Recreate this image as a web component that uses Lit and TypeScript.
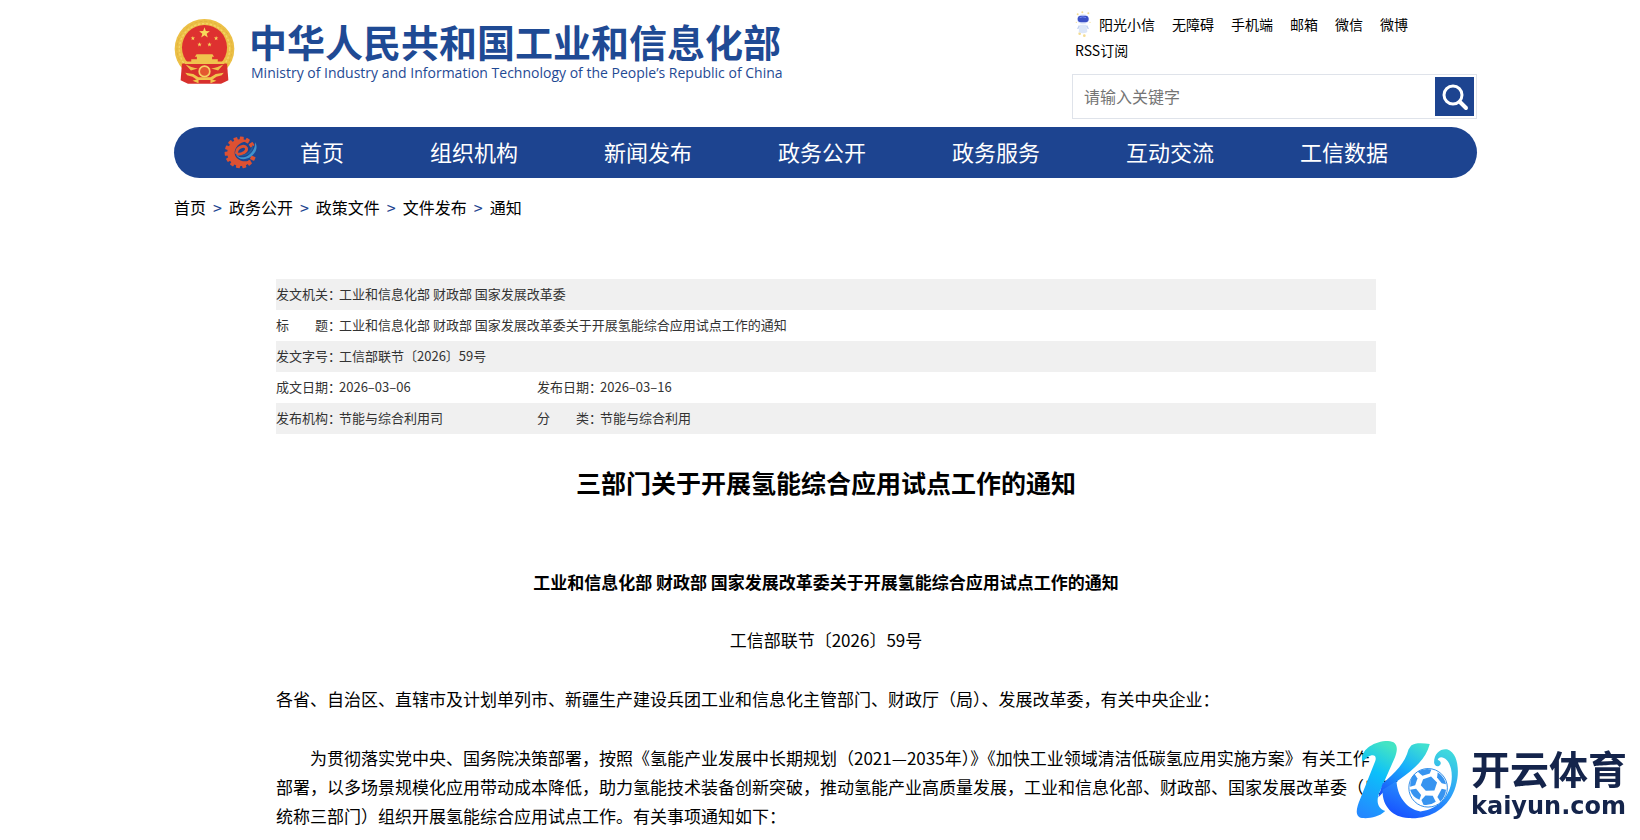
import { LitElement, html, css, svg } from "lit";
import { customElement } from "lit/decorators.js";

const EXTRA_LINKS = ["无障碍", "手机端", "邮箱", "微信", "微博"];
const NAV = ["首页", "组织机构", "新闻发布", "政务公开", "政务服务", "互动交流", "工信数据"];
const CRUMBS = ["首页", "政务公开", "政策文件", "文件发布", "通知"];

const starPath = (cx: number, cy: number, r: number) => {
  const pts: string[] = [];
  for (let i = 0; i < 10; i++) {
    const a = -Math.PI / 2 + (i * Math.PI) / 5;
    const k = i % 2 ? r * 0.4 : r;
    pts.push(`${(cx + k * Math.cos(a)).toFixed(1)},${(cy + k * Math.sin(a)).toFixed(1)}`);
  }
  return pts.join(" ");
};

const emblem = html`
  <svg class="emblem" viewBox="0 0 184 200" aria-hidden="true">
    <circle cx="92" cy="92" r="90" fill="#ecc046" />
    <circle cx="92" cy="92" r="83" fill="none" stroke="#dcab3a" stroke-width="2" stroke-dasharray="9 6" />
    <circle cx="92" cy="92" r="76" fill="none" stroke="#f5d568" stroke-width="4" stroke-dasharray="7 5" />
    <circle cx="92" cy="88" r="68" fill="#de3130" />
    <polygon points=${starPath(92, 44, 17)} fill="#f7d95b" />
    <polygon points=${starPath(57, 60, 7)} fill="#f7d95b" />
    <polygon points=${starPath(77, 79, 7)} fill="#f7d95b" />
    <polygon points=${starPath(107, 79, 7)} fill="#f7d95b" />
    <polygon points=${starPath(127, 60, 7)} fill="#f7d95b" />
    <path d="M68 108h48l5 8h-6v7h17v10H52v-10h17v-7h-6z" fill="#f0c44d" />
    <path d="M24 137l30-5h76l30 5 4 50-22 10H42l-22-10z" fill="#d8302d" />
    <path d="M32 130h120v8H32z" fill="#f0c44d" />
    <path d="M35 139q57 28 114 0l-16 18q-41-14-82 0z" fill="#efc24a" />
    <circle cx="92" cy="160" r="16" fill="#e4582f" stroke="#f6d364" stroke-width="5" />
    <path d="M34 164l24 4 16 10h36l16-10 24-4-6 8-16 4-14 10H70l-14-10-16-4z" fill="#f0c44d" />
    <path d="M56 188l18-6v14zM128 188l-18-6v14z" fill="#f0c44d" />
  </svg>
`;

const mascot = html`
  <svg class="mascot" viewBox="0 0 48 78" aria-hidden="true">
    <g fill="#f3dc93">
      <circle cx="8" cy="10" r="3" /><circle cx="22" cy="4" r="3" /><circle cx="40" cy="7" r="3" />
      <circle cx="4" cy="34" r="2" /><circle cx="45" cy="34" r="2" />
      <circle cx="14" cy="68" r="4" /><circle cx="28" cy="74" r="4" />
    </g>
    <ellipse cx="24" cy="25" rx="18" ry="15" fill="#dfe6fa" />
    <rect x="8" y="14" width="33" height="20" rx="10" fill="#3c51c6" />
    <path d="M14 20q9-5 19 0" stroke="#7388ea" stroke-width="3" fill="none" />
    <path d="M14 41h20l3 22q-13 8-26 0z" fill="#dce6f8" />
    <path d="M13 44l-5 10M35 44l5 10" stroke="#c3d2f1" stroke-width="4" />
  </svg>
`;

const gearTeeth = Array.from({ length: 13 }, (_, i) => 25 + i * 25);
const gear = html`
  <svg class="gear" viewBox="0 0 100 100" aria-hidden="true">
    <g fill="#dd5132">
      ${gearTeeth.map((a) => svg`<rect x="84" y="44" width="14" height="12" rx="2" transform="rotate(${a} 50 50)" />`)}
    </g>
    <path d="M80 79A41 41 0 1 1 76 18C61 15 50 20 42 28C26 46 30 66 50 74C60 78 72 78 80 73z" fill="#dd5132" />
    <path d="M38 51C39 33 63 26 68 37C71 47 55 55 43 55" fill="none" stroke="#dd5132" stroke-width="9" stroke-linecap="round" />
    <path d="M36 47C36 66 60 71 78 55C89 45 96 31 94 19C104 32 97 53 80 64C58 77 34 69 36 47z" fill="#3f93cd" />
    <path d="M45 57C62 61 82 49 87 26C93 47 69 68 45 57z" fill="#225f9f" />
  </svg>
`;

const ballMark = html`
  <svg class="mark" viewBox="0 0 310 236" aria-hidden="true">
    <defs>
      <linearGradient id="stem" x1="0.6" y1="0" x2="0.3" y2="1">
        <stop offset="0" stop-color="#43e4c4" />
        <stop offset="0.4" stop-color="#0cc0fa" />
        <stop offset="1" stop-color="#2489ff" />
      </linearGradient>
      <linearGradient id="arm" x1="0.8" y1="0" x2="0.2" y2="1">
        <stop offset="0" stop-color="#40e0d0" />
        <stop offset="0.45" stop-color="#16b0fb" />
        <stop offset="1" stop-color="#1c55fa" />
      </linearGradient>
      <linearGradient id="swoosh" x1="0.8" y1="0" x2="0.3" y2="1">
        <stop offset="0" stop-color="#3ed9dd" />
        <stop offset="0.5" stop-color="#2b9dfb" />
        <stop offset="1" stop-color="#1855ff" />
      </linearGradient>
    </defs>
    <path d="M20 66C8 34 50 2 96 2C126 3 128 25 116 54L70 158C62 180 61 202 88 213C68 232 40 236 18 234C-6 230 2 202 12 178L58 62C66 38 38 40 20 66z" fill="url(#stem)" />
    <path d="M166 16C178 6 202 8 222 11C210 58 176 84 134 116C106 136 84 154 67 172L80 130C118 98 148 68 158 28z" fill="url(#arm)" />
    <path d="M80 149L122 123C124 164 148 205 194 214C264 206 298 144 286 86C278 50 250 44 246 59C251 60 258 65 254 73C249 82 236 79 235 67C235 38 256 24 276 28C306 38 314 92 300 138C280 206 220 238 158 234C108 232 78 196 80 149z" fill="url(#swoosh)" />
    <circle cx="217" cy="143" r="58" fill="#fff" stroke="#338fe8" stroke-width="3" />
    <g fill="#3794f0">
      <path d="M202 117l24-8 18 18-8 24-26 1-15-17z" />
      <path d="M185 94q20-11 42-6l-5 12-22 7z" />
      <path d="M246 96q20 14 25 36l-13-3-14-17z" />
      <path d="M258 146l13 3q-2 22-17 36l-9-14z" />
      <path d="M209 166l22 1 9 18q-16 12-37 9l-6-14z" />
      <path d="M163 149l18-3 15 19-5 14q-22-8-28-30z" />
      <path d="M176 101l9 14-7 20-15 5q-1-23 13-39z" />
    </g>
  </svg>
`;

@customElement("app-root")
export class AppRoot extends LitElement {
  static styles = css`
    :host {
      display: block;
      min-height: 100vh;
      background: #fff;
      color: #000;
      font-family: "Noto Sans CJK SC", "Noto Sans", sans-serif;
      font-size: 16px;
    }
    * { box-sizing: border-box; }
    a { color: inherit; text-decoration: none; }
    .page { padding: 0 163px 0 174px; }
    .header { display: flex; justify-content: space-between; height: 127px; }
    .brand { display: flex; gap: 14px; padding-top: 18px; color: #1f4a94; }
    .emblem { width: 61px; height: 67px; }
    .cn { display: block; font-size: 38px; line-height: 46px; font-weight: 700; }
    .en { display: block; font-family: "Open Sans", "Noto Sans", sans-serif; font-size: 14px; line-height: 18px; padding-left: 2px; }
    .tools { width: 405px; padding-top: 11px; }
    .links { display: flex; flex-wrap: wrap; column-gap: 17px; margin: 0; padding: 0 56px 0 3px; list-style: none; font-size: 14px; line-height: 26px; }
    .links a { display: flex; align-items: center; gap: 8px; }
    .mascot { width: 16px; height: 26px; }
    .search { display: flex; align-items: center; margin-top: 11px; height: 45px; padding: 2px; border: 1px solid #dfe3ea; }
    .search input { flex: 1; min-width: 0; height: 36px; border: 0; outline: 0; padding: 0 9px 2px; font: inherit; color: #333; background: none; }
    .search input::placeholder { color: #757575; }
    .search button { display: grid; place-items: center; width: 39px; height: 39px; border: 0; padding: 0; background: #1d4490; }
    .search svg { width: 28px; height: 28px; }
    .nav { display: flex; align-items: center; height: 51px; padding: 0 50px; border-radius: 26px; background: #1d4490; color: #fff; }
    .gear { width: 33px; height: 33px; margin-right: 43px; }
    .nav ul { display: flex; gap: 86px; margin: 0; padding: 0 0 4px; list-style: none; font-size: 22px; line-height: 32px; white-space: nowrap; }
    .crumbs { display: flex; gap: 7px; padding-top: 17px; line-height: 24px; }
    .crumbs span { color: #1d4490; }
    .content { padding: 60px 101px 0 102px; }
    table { width: 100%; border-collapse: collapse; table-layout: fixed; font-size: 13px; line-height: 18px; color: #333; }
    tr:nth-child(odd) { background: #f0f0f0; }
    th, td { height: 31px; padding: 0 0 2px; text-align: left; font-weight: 400; white-space: nowrap; }
    .c-label { width: 63px; }
    .c-value { width: 198px; }
    .spread { display: flex; width: 65px; }
    .spread b { font-weight: 400; flex: 1; }
    h1 { margin: 29px 0 0; font-size: 25px; line-height: 38px; font-weight: 700; text-align: center; }
    .article { font-size: 17px; line-height: 29px; }
    .article p { margin: 0 0 30px; }
    h2 { margin: 66px 0 29px; font-size: 17px; line-height: 29px; font-weight: 700; text-align: center; }
    .article .docno { text-align: center; }
    .article .body { text-indent: 2em; white-space: nowrap; }
    .watermark { position: fixed; right: 13px; bottom: 20px; display: flex; gap: 12px; color: #14244b; }
    .mark { width: 103px; height: 79px; }
    .wm-text { padding-top: 2px; }
    .wm-cn { display: block; font-size: 39px; line-height: 50px; font-weight: 700; }
    .wm-en { display: block; font-family: "DejaVu Sans", sans-serif; font-size: 24px; line-height: 28px; font-weight: 700; }
  `;

  private label(text: string) {
    const chars = [...text];
    return chars.length === 2
      ? html`<span class="spread"><b>${chars[0]}</b><span>${chars[1]}：</span></span>`
      : html`${text}：`;
  }

  render() {
    return html`
      <div class="page">
        <header class="header">
          <a class="brand" href="#">
            ${emblem}
            <span>
              <span class="cn">中华人民共和国工业和信息化部</span>
              <span class="en">Ministry of Industry and Information Technology of the People’s Republic of China</span>
            </span>
          </a>
          <div class="tools">
            <ul class="links">
              <li><a href="#">${mascot}阳光小信</a></li>
              ${EXTRA_LINKS.map((t) => html`<li><a href="#">${t}</a></li>`)}
              <li><a href="#">RSS订阅</a></li>
            </ul>
            <form class="search" @submit=${(e: Event) => e.preventDefault()}>
              <input type="text" aria-label="请输入关键字" placeholder="请输入关键字" />
              <button type="submit" aria-label="搜索">
                <svg viewBox="0 0 28 28" fill="none" stroke="#fff" stroke-width="3" stroke-linecap="round">
                  <circle cx="12" cy="12" r="9" /><path d="M19 19l6 6" stroke-width="4" />
                </svg>
              </button>
            </form>
          </div>
        </header>
        <nav class="nav">
          ${gear}
          <ul>${NAV.map((t) => html`<li><a href="#">${t}</a></li>`)}</ul>
        </nav>
        <div class="crumbs">
          ${CRUMBS.map((t, i) => html`${i ? html`<span>&gt;</span>` : ""}<a href="#">${t}</a>`)}
        </div>
        <main class="content">
          <table>
            <colgroup><col class="c-label" /><col class="c-value" /><col class="c-label" /><col /></colgroup>
            <tbody>
              <tr><th scope="row">${this.label("发文机关")}</th><td colspan="3">工业和信息化部 财政部 国家发展改革委</td></tr>
              <tr><th scope="row">${this.label("标题")}</th><td colspan="3">工业和信息化部 财政部 国家发展改革委关于开展氢能综合应用试点工作的通知</td></tr>
              <tr><th scope="row">${this.label("发文字号")}</th><td colspan="3">工信部联节〔2026〕59号</td></tr>
              <tr>
                <th scope="row">${this.label("成文日期")}</th><td>2026–03–06</td>
                <th scope="row">${this.label("发布日期")}</th><td>2026–03–16</td>
              </tr>
              <tr>
                <th scope="row">${this.label("发布机构")}</th><td>节能与综合利用司</td>
                <th scope="row">${this.label("分类")}</th><td>节能与综合利用</td>
              </tr>
            </tbody>
          </table>
          <h1>三部门关于开展氢能综合应用试点工作的通知</h1>
          <article class="article">
            <h2>工业和信息化部 财政部 国家发展改革委关于开展氢能综合应用试点工作的通知</h2>
            <p class="docno">工信部联节〔2026〕59号</p>
            <p>各省、自治区、直辖市及计划单列市、新疆生产建设兵团工业和信息化主管部门、财政厅（局）、发展改革委，有关中央企业：</p>
            <p class="body">为贯彻落实党中央、国务院决策部署，按照《氢能产业发展中长期规划（2021—2035年）》《加快工业领域清洁低碳氢应用实施方案》有关工作<br />部署，以多场景规模化应用带动成本降低，助力氢能技术装备创新突破，推动氢能产业高质量发展，工业和信息化部、财政部、国家发展改革委（以下<br />统称三部门）组织开展氢能综合应用试点工作。有关事项通知如下：</p>
          </article>
        </main>
      </div>
      <aside class="watermark">
        ${ballMark}
        <span class="wm-text">
          <span class="wm-cn">开云体育</span>
          <span class="wm-en">kaiyun.com</span>
        </span>
      </aside>
    `;
  }
}
